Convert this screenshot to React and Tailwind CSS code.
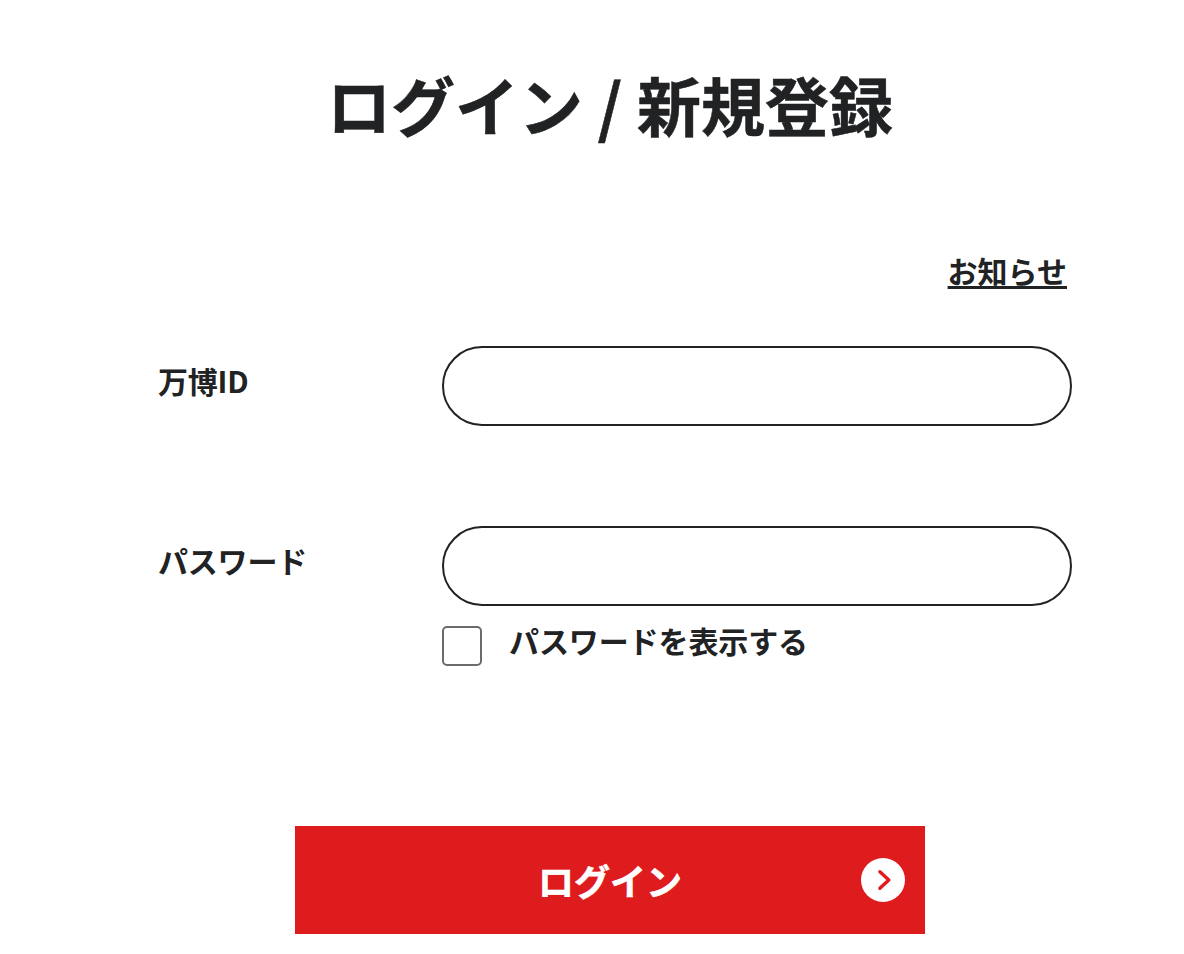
import { useState } from "react";

export default function App() {
  const [showPassword, setShowPassword] = useState(false);

  return (
    <main className="h-[954px] w-[1184px] overflow-hidden bg-white font-['Noto_Sans_CJK_JP',sans-serif] font-bold text-[#202224]">
      <h1 className="ml-9 pt-[55px] text-center text-[64px] leading-[96px] [-webkit-text-stroke:0.5px]">
        ログイン / 新規登録
      </h1>

      <form className="ml-[158px] w-[914px]" onSubmit={(e) => e.preventDefault()}>
        <div className="mt-[97px] flex justify-end pr-[5px]">
          <a
            href="#"
            className="text-[30px] leading-[45px] underline decoration-[3px] underline-offset-[3px]"
          >
            お知らせ
          </a>
        </div>

        <Field id="expo-id" label="万博ID" type="text" className="mt-[53px]" />
        <Field
          id="password"
          label="パスワード"
          type={showPassword ? "text" : "password"}
          className="mt-[100px]"
        />

        <label className="mt-5 ml-[284px] flex h-10 gap-[27px]">
          <input
            type="checkbox"
            checked={showPassword}
            onChange={(e) => setShowPassword(e.target.checked)}
            className="size-10 appearance-none rounded-[5px] border-2 border-[#6b6b6b] bg-white checked:bg-[#de1c1e]"
          />
          <span className="-mt-1.5 text-[30px] leading-10 tracking-[-0.1px]">
            パスワードを表示する
          </span>
        </label>

        <button
          type="submit"
          className="mt-[160px] ml-[137px] flex h-[108px] w-[630px] items-center bg-[#de1c1e] pr-5 pl-16 text-white"
        >
          <span className="flex-1 text-[36px] leading-[54px] [-webkit-text-stroke:0.6px]">
            ログイン
          </span>
          <ArrowIcon />
        </button>
      </form>
    </main>
  );
}

function Field({ id, label, type, className }) {
  return (
    <div className={`flex ${className}`}>
      <label
        htmlFor={id}
        className="w-[284px] pt-3 text-[30px] leading-[45px] tracking-[-0.2px]"
      >
        {label}
      </label>
      <input
        id={id}
        type={type}
        className="h-20 w-[630px] rounded-full border-2 border-[#202224] bg-white px-8 text-[30px] outline-none"
      />
    </div>
  );
}

function ArrowIcon() {
  return (
    <svg viewBox="0 0 44 44" className="size-11" fill="none">
      <circle cx="22" cy="22" r="22" fill="white" />
      <path
        d="M18.9 13.7L27.8 22L18.9 30.3"
        stroke="#de1c1e"
        strokeWidth="3.4"
        strokeLinecap="round"
        strokeLinejoin="round"
      />
    </svg>
  );
}
